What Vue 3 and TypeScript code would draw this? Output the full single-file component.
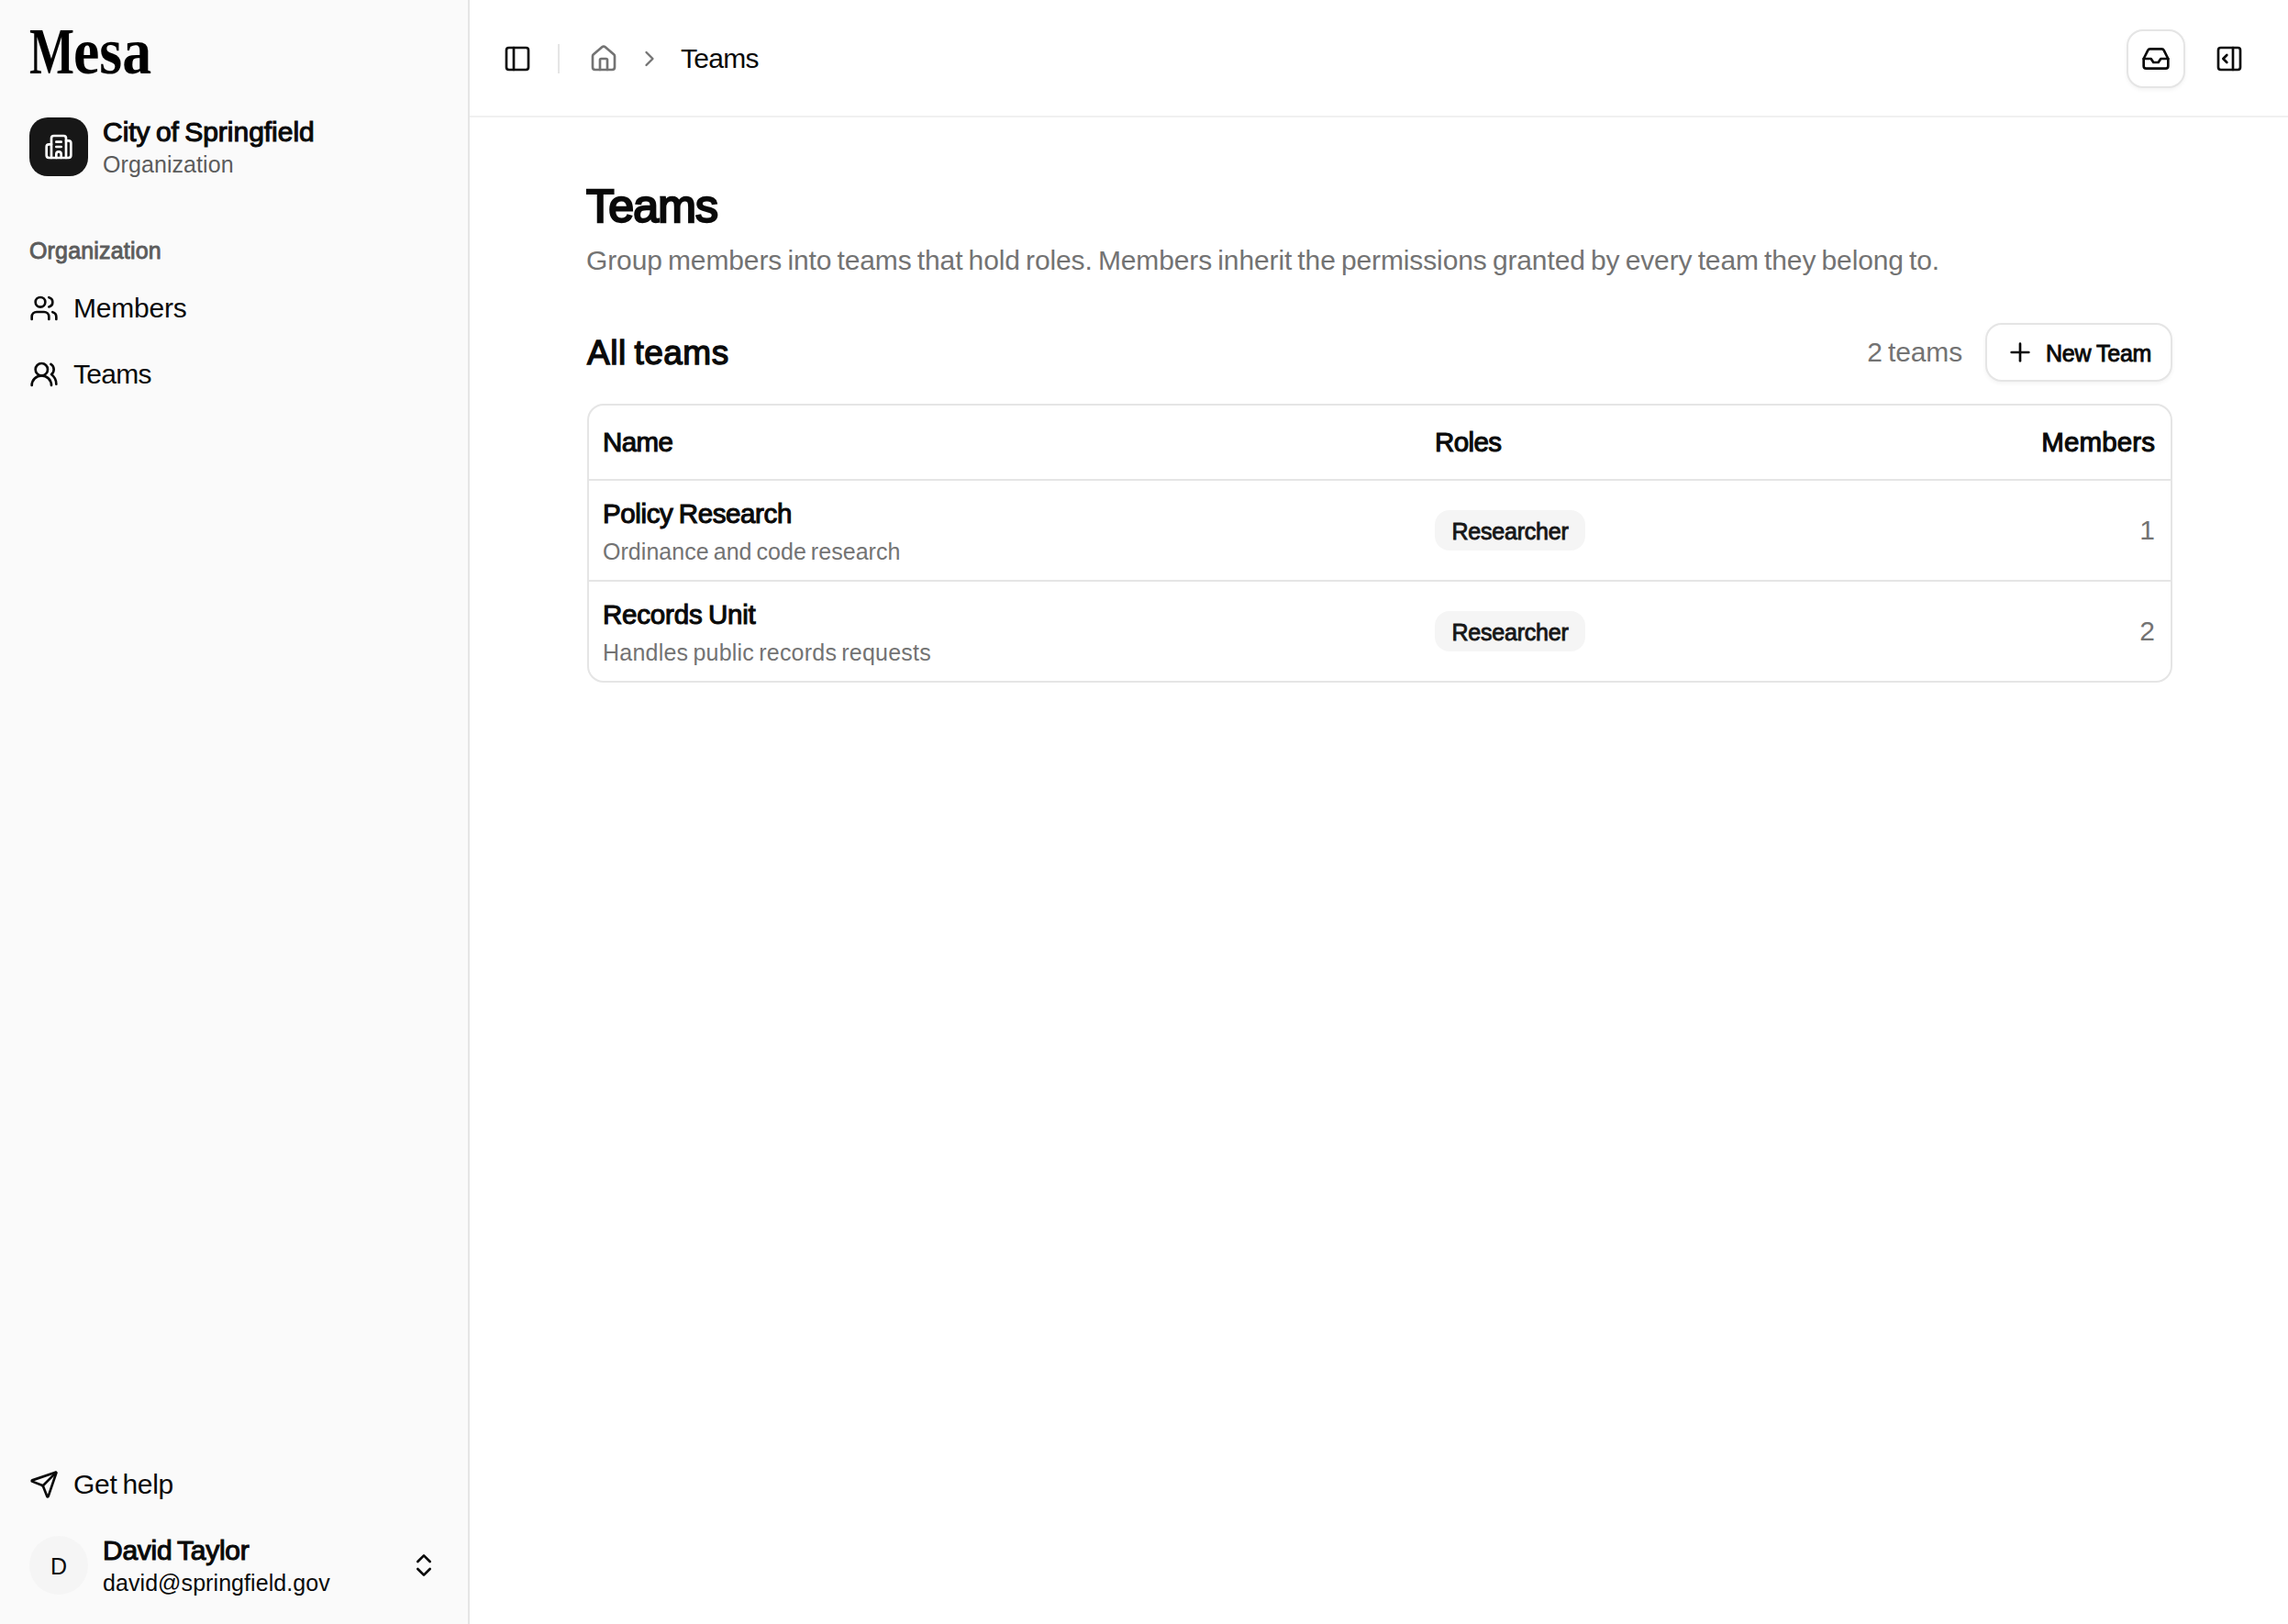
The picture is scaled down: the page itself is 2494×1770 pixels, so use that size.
<script setup lang="ts">
import { h, type FunctionalComponent } from 'vue'

const icons: Record<string, string[]> = {
  building: [
    'M10 12h4',
    'M10 8h4',
    'M14 21v-3a2 2 0 0 0-4 0v3',
    'M6 10H4a2 2 0 0 0-2 2v7a2 2 0 0 0 2 2h16a2 2 0 0 0 2-2V9a2 2 0 0 0-2-2h-2',
    'M6 21V5a2 2 0 0 1 2-2h8a2 2 0 0 1 2 2v16',
  ],
  users: [
    'M16 21v-2a4 4 0 0 0-4-4H6a4 4 0 0 0-4 4v2',
    'M16 3.128a4 4 0 0 1 0 7.744',
    'M22 21v-2a4 4 0 0 0-3-3.87',
    'M5 7a4 4 0 1 0 8 0a4 4 0 1 0-8 0',
  ],
  usersRound: [
    'M18 21a8 8 0 0 0-16 0',
    'M5 8a5 5 0 1 0 10 0a5 5 0 1 0-10 0',
    'M22 20c0-3.37-2-6.5-4-8a5 5 0 0 0-.45-8.3',
  ],
  send: [
    'M14.536 21.686a.5.5 0 0 0 .937-.024l6.5-19a.496.496 0 0 0-.635-.635l-19 6.5a.5.5 0 0 0-.024.937l7.93 3.18a2 2 0 0 1 1.112 1.11z',
    'm21.854 2.147-10.94 10.939',
  ],
  chevronsUpDown: ['m7 15 5 5 5-5', 'm7 9 5-5 5 5'],
  panelLeft: [
    'M5 3h14a2 2 0 0 1 2 2v14a2 2 0 0 1-2 2H5a2 2 0 0 1-2-2V5a2 2 0 0 1 2-2z',
    'M9 3v18',
  ],
  panelRightOpen: [
    'M5 3h14a2 2 0 0 1 2 2v14a2 2 0 0 1-2 2H5a2 2 0 0 1-2-2V5a2 2 0 0 1 2-2z',
    'M15 3v18',
    'm10 15-3-3 3-3',
  ],
  house: [
    'M15 21v-8a1 1 0 0 0-1-1h-4a1 1 0 0 0-1 1v8',
    'M3 10a2 2 0 0 1 .709-1.528l7-6a2 2 0 0 1 2.582 0l7 6A2 2 0 0 1 21 10v9a2 2 0 0 1-2 2H5a2 2 0 0 1-2-2z',
  ],
  chevronRight: ['m9 18 6-6-6-6'],
  inbox: [
    'M22 12h-6l-2 3h-4l-2-3H2',
    'M5.45 5.11 2 12v6a2 2 0 0 0 2 2h16a2 2 0 0 0 2-2v-6l-3.45-6.89A2 2 0 0 0 16.76 4H7.24a2 2 0 0 0-1.79 1.11z',
  ],
  plus: ['M5 12h14', 'M12 5v14'],
}

const Icon: FunctionalComponent<{ name: string; size?: number }> = (props) =>
  h(
    'svg',
    {
      width: props.size ?? 32,
      height: props.size ?? 32,
      viewBox: '0 0 24 24',
      fill: 'none',
      stroke: 'currentColor',
      'stroke-width': 2,
      'stroke-linecap': 'round',
      'stroke-linejoin': 'round',
      'aria-hidden': 'true',
    },
    icons[props.name].map((d) => h('path', { d })),
  )
Icon.props = ['name', 'size']

interface Team {
  name: string
  description: string
  role: string
  members: number
  cls: string
}

const teams: Team[] = [
  { name: 'Policy Research', description: 'Ordinance and code research', role: 'Researcher', members: 1, cls: 'policy' },
  { name: 'Records Unit', description: 'Handles public records requests', role: 'Researcher', members: 2, cls: 'records' },
]
</script>

<template>
  <div class="app">
    <aside class="sidebar">
      <div class="logo"><span class="logo-cap">M</span><span class="logo-rest">esa</span></div>
      <div class="org">
        <div class="org-tile"><Icon name="building" /></div>
        <div class="stack">
          <span class="strong org-name">City of Springfield</span>
          <span class="small muted-dark org-kind">Organization</span>
        </div>
      </div>
      <div class="group-label">Organization</div>
      <nav>
        <a class="nav-item members"><Icon name="users" /><span>Members</span></a>
        <a class="nav-item tight"><Icon name="usersRound" /><span>Teams</span></a>
      </nav>
      <div class="spacer"></div>
      <a class="nav-item help"><Icon name="send" /><span>Get help</span></a>
      <div class="user">
        <div class="avatar">D</div>
        <div class="stack">
          <span class="strong user-name">David Taylor</span>
          <span class="small user-mail">david@springfield.gov</span>
        </div>
        <Icon name="chevronsUpDown" class="user-chevrons" />
      </div>
    </aside>

    <div class="content">
      <header class="topbar">
        <Icon name="panelLeft" />
        <span class="divider"></span>
        <Icon name="house" class="muted" />
        <Icon name="chevronRight" :size="28" class="muted crumb-sep" />
        <span class="crumb">Teams</span>
        <div class="spacer"></div>
        <button class="icon-button"><Icon name="inbox" /></button>
        <Icon name="panelRightOpen" />
      </header>

      <main>
        <h1>Teams</h1>
        <p class="lead">
          Group members into teams that hold roles. Members inherit the permissions granted by every team they belong to.
        </p>

        <div class="section-head">
          <h2>All teams</h2>
          <div class="spacer"></div>
          <span class="count">2 teams</span>
          <button class="new-team"><Icon name="plus" /><span>New Team</span></button>
        </div>

        <div class="table">
          <div class="row head">
            <span class="th name-th">Name</span>
            <span class="th roles-th">Roles</span>
            <span class="th members-th">Members</span>
          </div>
          <div v-for="team in teams" :key="team.name" class="row" :class="team.cls">
            <div class="cell-name">
              <span class="team-name">{{ team.name }}</span>
              <span class="team-desc">{{ team.description }}</span>
            </div>
            <div class="cell-role"><span class="badge">{{ team.role }}</span></div>
            <span class="cell-count">{{ team.members }}</span>
          </div>
        </div>
      </main>
    </div>
  </div>
</template>

<style>
body {
  background: #fff;
}
</style>

<style scoped>
.app {
  display: flex;
  height: 1770px;
  font-family: "Liberation Sans", Arial, sans-serif;
  font-size: 30px;
  color: #0a0a0a;
}
svg {
  display: block;
  flex: none;
}
button {
  font: inherit;
  color: inherit;
  margin: 0;
  background: #fff;
  border: 2px solid #e5e5e5;
  box-shadow: 0 2px 4px rgba(0, 0, 0, 0.05);
  box-sizing: border-box;
}
.spacer {
  flex: 1;
}
.muted {
  color: #737373;
}

/* Sidebar */
.sidebar {
  display: flex;
  flex-direction: column;
  flex: none;
  width: 512px;
  box-sizing: border-box;
  padding: 0 32px 32px;
  background: #fafafa;
  border-right: 2px solid #e5e5e5;
}
.logo {
  display: flex;
  height: 64px;
  margin: 24px 0 40px;
  font-family: "Liberation Serif", "Times New Roman", serif;
  font-weight: 700;
  font-size: 71px;
  line-height: 64px;
  color: #000;
}
.logo-cap {
  width: 48px;
  transform: scaleX(0.73);
  transform-origin: left;
}
.logo-rest {
  transform: scaleX(0.9);
  transform-origin: left;
}
.org,
.user {
  display: flex;
  align-items: center;
  height: 64px;
  gap: 16px;
}
.org-tile {
  display: flex;
  align-items: center;
  justify-content: center;
  width: 64px;
  height: 64px;
  border-radius: 20px;
  background: #171717;
  color: #fff;
}
.stack {
  display: flex;
  flex-direction: column;
  line-height: 36px;
  padding-top: 1px;
  white-space: nowrap;
}
.strong {
  -webkit-text-stroke: 1.1px currentColor;
}
.small {
  font-size: 25px;
  line-height: 34px;
}
.org-name {
  letter-spacing: -0.02px;
  word-spacing: -2px;
}
.org-kind {
  letter-spacing: 0.08px;
}
.muted-dark {
  color: #5c5c5c;
}
.group-label {
  margin: 61px 0 7px;
  line-height: 40px;
  font-size: 25px;
  letter-spacing: 0.17px;
  color: #5c5c5c;
  -webkit-text-stroke: 0.9px currentColor;
}
.nav-item {
  display: flex;
  align-items: center;
  height: 72px;
  gap: 16px;
}
.members {
  letter-spacing: -0.2px;
}
.nav-item.tight,
.crumb {
  letter-spacing: -0.7px;
}
.help {
  margin-bottom: 20px;
  letter-spacing: -0.3px;
  word-spacing: -2px;
}
.avatar {
  display: flex;
  align-items: center;
  justify-content: center;
  width: 64px;
  height: 64px;
  box-sizing: border-box;
  padding-top: 2px;
  border-radius: 50%;
  background: #f5f5f5;
  font-size: 25px;
}
.user-name {
  letter-spacing: -0.25px;
  word-spacing: -2px;
}
.user-mail {
  letter-spacing: 0.07px;
}
.user-chevrons {
  margin-left: auto;
}

/* Top bar */
.content {
  flex: 1;
  min-width: 0;
}
.topbar {
  display: flex;
  align-items: center;
  height: 128px;
  box-sizing: border-box;
  padding: 2px 48px 0 36px;
  border-bottom: 2px solid #f0f0f0;
}
.divider {
  width: 2px;
  height: 32px;
  margin: 0 32px 0 28px;
  background: #e5e5e5;
}
.crumb-sep {
  margin: 0 20px;
}
.icon-button {
  display: flex;
  align-items: center;
  justify-content: center;
  width: 64px;
  height: 64px;
  margin-right: 32px;
  padding: 0;
  border-radius: 18px;
}

/* Page */
main {
  padding: 69px 126px 0 128px;
}
h1 {
  margin: 0 0 0 -1px;
  font-weight: 400;
  font-size: 50px;
  line-height: 56px;
  letter-spacing: -0.8px;
  -webkit-text-stroke: 2.4px currentColor;
}
.lead {
  margin: 9px 0 0 -1px;
  line-height: 44px;
  letter-spacing: -0.12px;
  word-spacing: -2px;
  white-space: nowrap;
  color: #737373;
}
.section-head {
  display: flex;
  align-items: center;
  height: 64px;
  margin: 46px 0 24px;
}
h2 {
  margin: 0;
  padding-top: 2px;
  font-weight: 400;
  font-size: 37px;
  letter-spacing: 0.5px;
  word-spacing: -2px;
  -webkit-text-stroke: 1.4px currentColor;
}
.count {
  margin-right: 25px;
  letter-spacing: -0.15px;
  word-spacing: -2px;
  color: #737373;
}
.new-team {
  display: flex;
  align-items: center;
  width: 204px;
  height: 64px;
  gap: 12px;
  padding: 0 0 0 20px;
  border-radius: 18px;
  font-size: 25px;
  letter-spacing: -0.25px;
  word-spacing: -0.5px;
  white-space: nowrap;
}
.new-team span {
  padding-top: 2px;
  -webkit-text-stroke: 0.9px currentColor;
}

/* Table */
.table {
  border: 2px solid #e5e5e5;
  border-radius: 18px;
}
.row {
  display: grid;
  grid-template-columns: 907px 1fr 200px;
  grid-template-rows: 100%;
  height: 108px;
  padding: 0 17px 0 15px;
}
.row + .row {
  border-top: 2px solid #e5e5e5;
}
.row.head {
  height: 80px;
  align-items: center;
  grid-template-rows: 80px;
}
.th,
.team-name {
  font-size: 29.5px;
  -webkit-text-stroke: 1.1px currentColor;
}
.name-th,
.roles-th {
  letter-spacing: -0.6px;
}
.members-th {
  letter-spacing: 0.1px;
  text-align: right;
}
.cell-name {
  display: flex;
  flex-direction: column;
  gap: 3px;
  padding-top: 16px;
}
.team-name {
  line-height: 40px;
}
.team-desc {
  font-size: 25px;
  line-height: 36px;
  color: #737373;
}
.policy .team-name {
  letter-spacing: -0.38px;
  word-spacing: -1.5px;
}
.policy .team-desc {
  letter-spacing: 0.04px;
  word-spacing: -2px;
}
.records .team-name {
  letter-spacing: -0.2px;
  word-spacing: -1.5px;
}
.records .team-desc {
  letter-spacing: 0.22px;
  word-spacing: -2px;
}
.cell-role {
  display: flex;
  align-items: center;
}
.badge {
  width: 164px;
  height: 44px;
  box-sizing: border-box;
  padding-top: 1px;
  border-radius: 16px;
  background: #f5f5f5;
  color: #171717;
  font-size: 25px;
  line-height: 44px;
  letter-spacing: -0.2px;
  text-align: center;
  -webkit-text-stroke: 0.9px currentColor;
}
.cell-count {
  line-height: 108px;
  text-align: right;
  color: #737373;
}
</style>
